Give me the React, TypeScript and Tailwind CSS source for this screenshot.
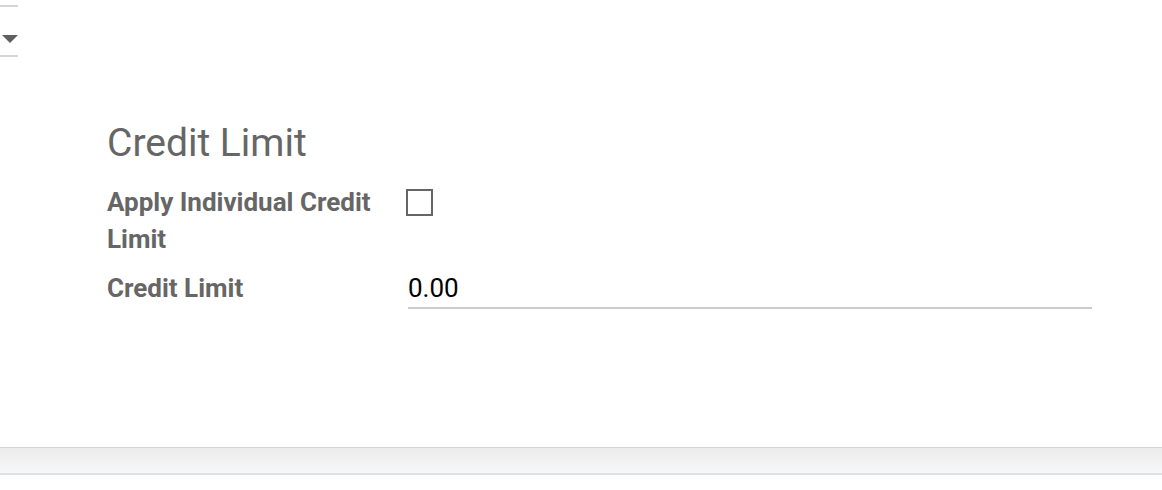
import React from "react";

export default function App() {
  return (
    <div className="w-[1162px] h-[490px] bg-white overflow-hidden flex flex-col font-['Roboto',_'Liberation_Sans',_sans-serif]">
      <div className="w-[18px] mt-[5px] h-[52px] border-t-2 border-b-2 border-[#d6d6d6] flex justify-end pt-[28px]">
        <svg width="16" height="8" viewBox="0 0 16 8">
          <polygon points="0,0 16,0 8,8" fill="#5f5f5f" />
        </svg>
      </div>
      <div className="ml-[107px]">
        <h2 className="mt-[64px] text-[39px] leading-[45px] text-[#666666] font-normal">Credit Limit</h2>
        <div className="mt-[18px] grid grid-cols-[299px_686px] gap-y-[12px] text-[26px] leading-[37px]">
          <div className="font-bold text-[#666666] pr-[20px]">Apply Individual Credit Limit</div>
          <div>
            <div className="mt-[5px] w-[27px] h-[27px] border-2 border-[#666666] bg-white" />
          </div>
          <div className="font-bold text-[#666666]">Credit Limit</div>
          <div className="ml-[2px] border-b-2 border-[#cccccc] text-black h-[39px]">0.00</div>
        </div>
      </div>
      <div className="mt-[138px] h-[28px] border-t border-[#d1d5d9] border-b-2 border-b-[#dde1e4] bg-gradient-to-b from-[#ebebeb] to-[#f8f8f8]" />
    </div>
  );
}
